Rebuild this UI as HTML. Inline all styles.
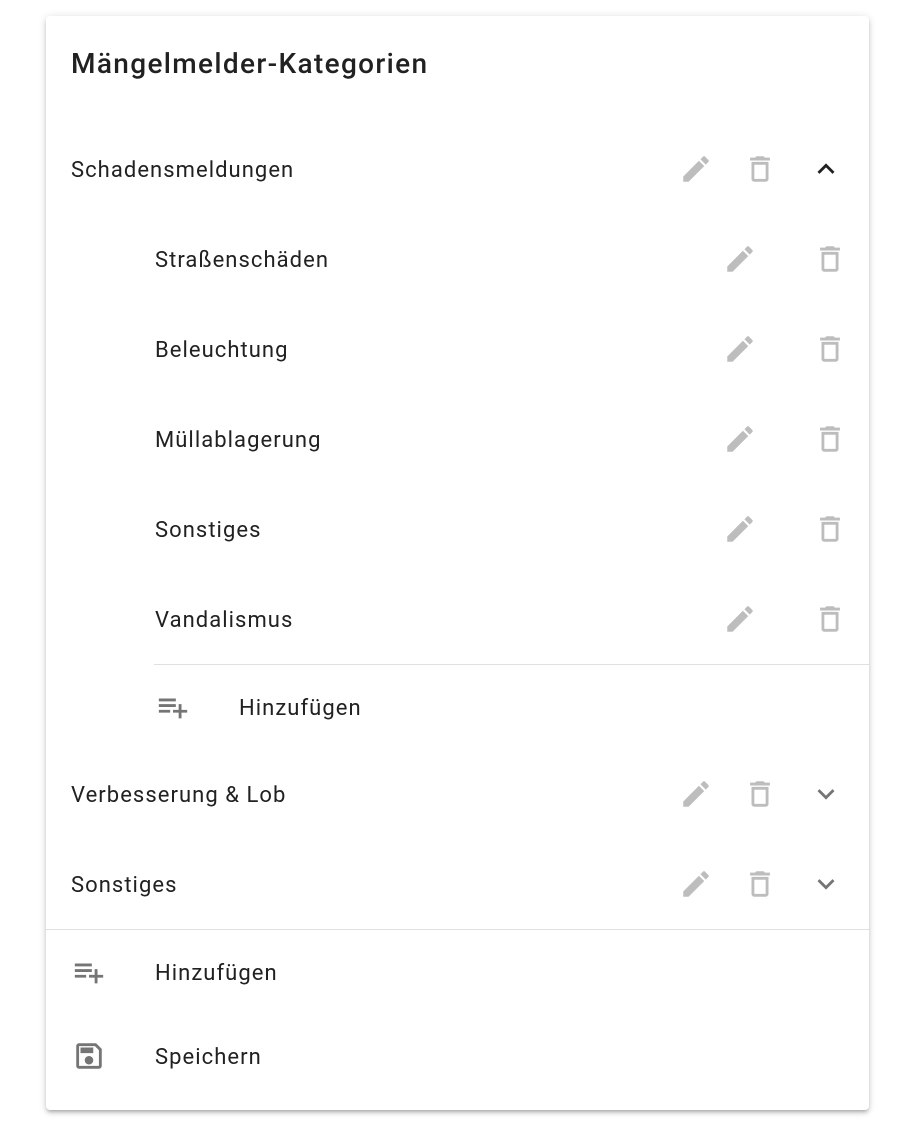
<!DOCTYPE html>
<html><head><meta charset="utf-8"><style>
body{margin:0;background:#fff;width:898px;height:1137px;position:relative;font-family:Roboto,"Liberation Sans",sans-serif;color:#212121;overflow:hidden}
.card{position:absolute;left:46px;top:16px;width:823px;height:1094px;background:#fff;box-shadow:0 3px 3px -2px rgba(0,0,0,.2),0 3px 5px 0 rgba(0,0,0,.14),0 1px 9px 0 rgba(0,0,0,.12);border-radius:4px}
.t{position:absolute;font-size:22px;line-height:30px;margin-top:2px;transform:translateY(-50%);white-space:nowrap;letter-spacing:1.05px}
h1{position:absolute;left:71px;top:44px;margin:0;font-size:28px;font-weight:500;line-height:40px;letter-spacing:1.35px}
svg{position:absolute;width:34px;height:34px;transform:translate(-50%,-50%)}
.g{fill:#bdbdbd}.d{fill:#757575}.k{fill:#212121}
.hr{position:absolute;height:1px;background:#e0e0e0}
</style></head><body>
<div class="card"></div>
<h1>Mängelmelder-Kategorien</h1>
<svg style="display:none"><defs>
<path id="ed" d="M3 17.25V21h3.75L17.81 9.94l-3.75-3.75L3 17.25zM20.71 7.04c.39-.39.39-1.02 0-1.41l-2.34-2.34a.9959.9959 0 0 0-1.41 0l-1.83 1.83 3.75 3.75 1.83-1.83z"/>
<path id="tr" d="M6 19c0 1.1.9 2 2 2h8c1.1 0 2-.9 2-2V7H6v12zM8 9h8v10H8V9zm7.5-5l-1-1h-5l-1 1H5v2h14V4z"/>
<path id="pl" d="M14 10H2v2h12v-2zm0-4H2v2h12V6zm4 8v-4h-2v4h-4v2h4v4h2v-4h4v-2h-4zM2 16h8v-2H2v2z"/>
</defs></svg>

<div class="t" style="left:71px;top:169px">Schadensmeldungen</div>
<svg viewBox="0 0 24 24" class="g" style="left:696px;top:169px"><use href="#ed"/></svg>
<svg viewBox="0 0 24 24" class="g" style="left:760px;top:169px"><use href="#tr"/></svg>
<svg viewBox="0 0 24 24" class="k" style="left:826px;top:169px"><path d="M12 8l-6 6 1.41 1.41L12 10.83l4.59 4.58L18 14z"/></svg>

<div class="t" style="left:155px;top:259px">Straßenschäden</div>
<svg viewBox="0 0 24 24" class="g" style="left:740px;top:259px"><use href="#ed"/></svg>
<svg viewBox="0 0 24 24" class="g" style="left:830px;top:259px"><use href="#tr"/></svg>
<div class="t" style="left:155px;top:349px">Beleuchtung</div>
<svg viewBox="0 0 24 24" class="g" style="left:740px;top:349px"><use href="#ed"/></svg>
<svg viewBox="0 0 24 24" class="g" style="left:830px;top:349px"><use href="#tr"/></svg>
<div class="t" style="left:155px;top:439px">Müllablagerung</div>
<svg viewBox="0 0 24 24" class="g" style="left:740px;top:439px"><use href="#ed"/></svg>
<svg viewBox="0 0 24 24" class="g" style="left:830px;top:439px"><use href="#tr"/></svg>
<div class="t" style="left:155px;top:529px">Sonstiges</div>
<svg viewBox="0 0 24 24" class="g" style="left:740px;top:529px"><use href="#ed"/></svg>
<svg viewBox="0 0 24 24" class="g" style="left:830px;top:529px"><use href="#tr"/></svg>
<div class="t" style="left:155px;top:619px">Vandalismus</div>
<svg viewBox="0 0 24 24" class="g" style="left:740px;top:619px"><use href="#ed"/></svg>
<svg viewBox="0 0 24 24" class="g" style="left:830px;top:619px"><use href="#tr"/></svg>
<div class="hr" style="left:154px;top:664px;width:715px"></div>
<svg viewBox="0 0 24 24" class="d" style="left:173px;top:707px"><use href="#pl"/></svg>
<div class="t" style="left:239px;top:707px">Hinzufügen</div>

<div class="t" style="left:71px;top:794px">Verbesserung &amp; Lob</div>
<svg viewBox="0 0 24 24" class="g" style="left:696px;top:794px"><use href="#ed"/></svg>
<svg viewBox="0 0 24 24" class="g" style="left:760px;top:794px"><use href="#tr"/></svg>
<svg viewBox="0 0 24 24" class="d" style="left:826px;top:794px"><path d="M16.59 8.59L12 13.17 7.41 8.59 6 10l6 6 6-6z"/></svg>
<div class="t" style="left:71px;top:884px">Sonstiges</div>
<svg viewBox="0 0 24 24" class="g" style="left:696px;top:884px"><use href="#ed"/></svg>
<svg viewBox="0 0 24 24" class="g" style="left:760px;top:884px"><use href="#tr"/></svg>
<svg viewBox="0 0 24 24" class="d" style="left:826px;top:884px"><path d="M16.59 8.59L12 13.17 7.41 8.59 6 10l6 6 6-6z"/></svg>
<div class="hr" style="left:46px;top:929px;width:823px"></div>
<svg viewBox="0 0 24 24" class="d" style="left:89px;top:972px"><use href="#pl"/></svg>
<div class="t" style="left:155px;top:972px">Hinzufügen</div>
<svg viewBox="0 0 24 24" class="d" style="left:89px;top:1056px"><path d="M17 3H5c-1.11 0-2 .9-2 2v14c0 1.1.89 2 2 2h14c1.1 0 2-.9 2-2V7l-4-4zm2 16H5V5h11.17L19 7.830V19zm-7-7c-1.66 0-3 1.34-3 3s1.34 3 3 3 3-1.340 3-3-1.34-3-3-3zM6 6h9v4H6z"/></svg>
<div class="t" style="left:155px;top:1056px">Speichern</div>
</body></html>
